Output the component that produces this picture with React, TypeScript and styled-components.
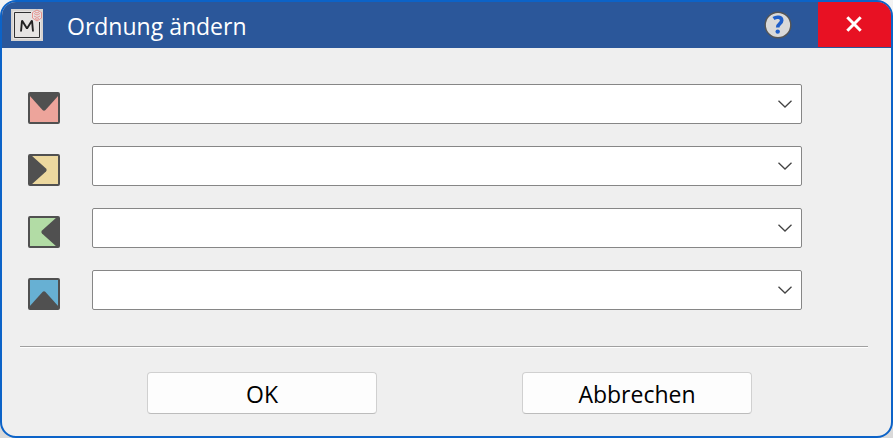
import React from "react";
import styled, { createGlobalStyle } from "styled-components";

const GlobalStyle = createGlobalStyle`
  * { box-sizing: border-box; }
  body {
    margin: 0;
    background: linear-gradient(#f3f3f3, #d9d9d9);
    font-family: "Open Sans", "Noto Sans", sans-serif;
  }
`;

const Dialog = styled.form`
  display: flex;
  flex-direction: column;
  min-height: 100vh;
  border: 2px solid #0c63c8;
  border-radius: 16px;
  background: #efefef;
  overflow: hidden;
`;

const TitleBar = styled.header`
  display: flex;
  align-items: center;
  height: 46px;
  padding-left: 9px;
  background: #2b579a;
  color: #fff;
`;

const Title = styled.h1`
  flex: 1;
  margin: 0 0 0 24px;
  padding-top: 2px;
  font-size: 23px;
  font-weight: 400;
  line-height: 32px;
  white-space: nowrap;
`;

const HelpButton = styled.button`
  display: flex;
  margin: 0 26px 0 0;
  padding: 0;
  border: 0;
  background: none;
`;

const CloseButton = styled.button`
  display: flex;
  align-items: center;
  justify-content: center;
  align-self: stretch;
  width: 73px;
  margin-bottom: 1px;
  padding: 0;
  border: 0;
  background: #e81123;
`;

const Fields = styled.div`
  display: flex;
  flex-direction: column;
  gap: 22px;
  padding: 36px 89px 0 26px;
`;

const Field = styled.label`
  display: flex;
  align-items: flex-end;
  gap: 32px;
`;

const SelectBox = styled.span`
  display: grid;
  flex: 1;
  align-items: center;
  & > * { grid-area: 1 / 1; }
`;

const Select = styled.select`
  appearance: none;
  width: 100%;
  height: 40px;
  padding: 0 36px 0 10px;
  border: 1px solid #868686;
  border-radius: 2px;
  background: #fff;
  font: inherit;
  font-size: 20px;
`;

const Chevron = styled.svg`
  justify-self: end;
  margin-right: 10px;
  pointer-events: none;
`;

const Separator = styled.hr`
  width: auto;
  height: 2px;
  margin: 36px 23px 0 18px;
  border: 0;
  border-top: 1px solid #a0a0a0;
  background: #fff;
`;

const Actions = styled.footer`
  display: flex;
  justify-content: center;
  gap: 145px;
  padding: 24px 139px 20px 145px;
`;

const ActionButton = styled.button`
  flex: 0 1 230px;
  height: 42px;
  padding: 2px 0 0;
  border: 1px solid #d0d0d0;
  border-bottom-color: #bcbcbc;
  border-radius: 4px;
  background: #fdfdfd;
  color: #000;
  font: inherit;
  font-size: 23px;
  line-height: 32px;
`;

const AppLogo = () => (
  <svg width="32" height="32" viewBox="0 0 32 32" aria-hidden="true">
    <rect width="32" height="32" fill="#d6d3d1" />
    <rect x="2" y="2" width="28" height="28" fill="#e6e4e2" />
    <path d="M20 3.500H3.500V28.500H28.500V13" fill="none" stroke="#303030" />
    <path
      d="M10 22.500L11 11.500L16 19.500L21 11.500L22 22.500"
      fill="none"
      stroke="#222"
      strokeWidth="1.900"
      strokeLinejoin="bevel"
    />
    <path
      d="M26 1L30.500 3.500V9L26 12L21.500 9V3.500ZM23 4.500L26 6L29 4.500M23 7L26 8.500L29 7M24 9.500L26 10.300L28 9.500M24 3L26 4L28 3"
      fill="none"
      stroke="#e58a88"
      strokeWidth="0.900"
    />
  </svg>
);

const HelpIcon = () => (
  <svg width="28" height="28" viewBox="0 0 28 28" aria-hidden="true">
    <circle cx="14" cy="14" r="12.800" fill="#d9d9d9" stroke="#555" strokeWidth="1.400" />
    <path
      d="M9.500 7.500C12.500 5.500 17.700 5.700 17.700 9.500C17.700 12.800 13.700 12.500 13.700 16.500"
      fill="none"
      stroke="#1f5fc9"
      strokeWidth="3.600"
    />
    <circle cx="13.700" cy="20.600" r="2.200" fill="#1f5fc9" />
  </svg>
);

const CloseIcon = () => (
  <svg width="17" height="17" viewBox="0 0 17 17" aria-hidden="true">
    <path d="M1.300 1.300L14.700 14.700M14.700 1.300L1.300 14.700" stroke="#fff" strokeWidth="3" />
  </svg>
);

type Side = { name: string; color: string; turn: number };

const SideIcon = ({ color, turn }: Omit<Side, "name">) => (
  <svg width="32" height="32" viewBox="0 0 32 32" aria-hidden="true">
    <rect x="1" y="1" width="30" height="30" rx="1" fill={color} stroke="#505050" strokeWidth="2" />
    <path
      d="M1 1H31V3L17.500 18Q16 19.500 14.500 18L1 3Z"
      fill="#505050"
      transform={`rotate(${turn} 16 16)`}
    />
  </svg>
);

const sides: Side[] = [
  { name: "Oben", color: "#eda49b", turn: 0 },
  { name: "Links", color: "#ecd89f", turn: 270 },
  { name: "Rechts", color: "#b2dca5", turn: 90 },
  { name: "Unten", color: "#67b0d3", turn: 180 },
];

export default function App() {
  return (
    <>
      <GlobalStyle />
      <Dialog>
        <TitleBar>
          <AppLogo />
          <Title>Ordnung ändern</Title>
          <HelpButton type="button" aria-label="Hilfe"><HelpIcon /></HelpButton>
          <CloseButton type="button" aria-label="Schließen"><CloseIcon /></CloseButton>
        </TitleBar>
        <Fields>
          {sides.map(({ name, color, turn }) => (
            <Field key={name}>
              <SideIcon color={color} turn={turn} />
              <SelectBox>
                <Select aria-label={name} />
                <Chevron width="14" height="8" viewBox="0 0 14 8" aria-hidden="true">
                  <path d="M0.500 0.700L7 7L13.500 0.700" fill="none" stroke="#444" strokeWidth="1.300" />
                </Chevron>
              </SelectBox>
            </Field>
          ))}
        </Fields>
        <Separator />
        <Actions>
          <ActionButton type="submit">OK</ActionButton>
          <ActionButton type="button">Abbrechen</ActionButton>
        </Actions>
      </Dialog>
    </>
  );
}
